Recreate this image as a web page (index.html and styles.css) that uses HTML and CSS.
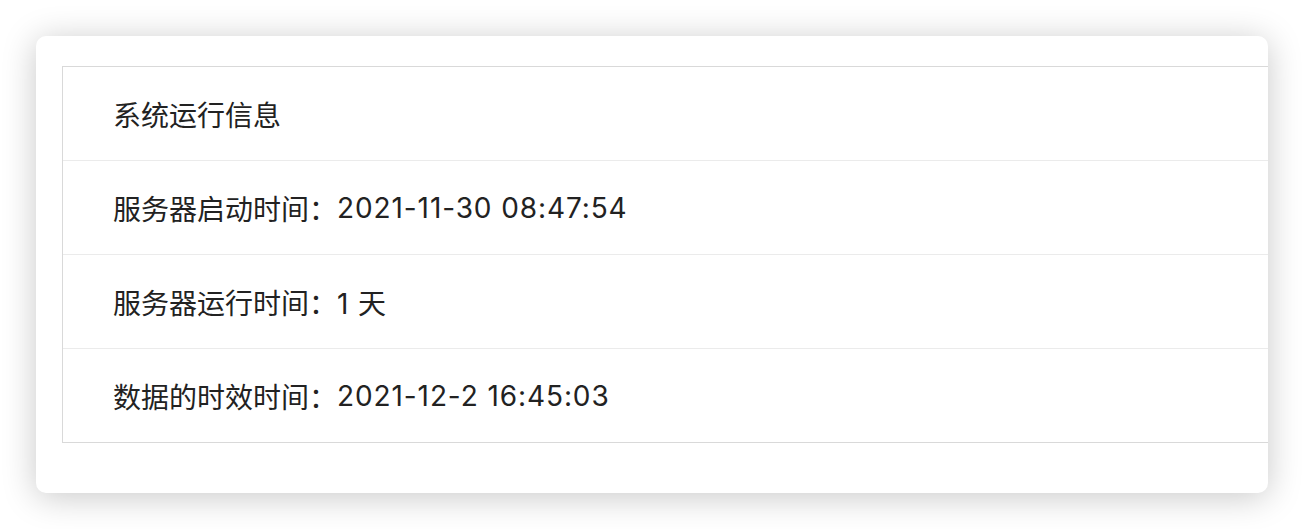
FILE: index.html
```html
<!DOCTYPE html>
<html lang="zh-CN">
<head>
<meta charset="utf-8">
<title>系统运行信息</title>
<link rel="stylesheet" href="styles.css">
</head>
<body>
<div class="card">
  <div class="table">
    <div class="row">系统运行信息</div>
    <div class="row">服务器启动时间：<span class="val">2021-11-30 08:47:54</span></div>
    <div class="row">服务器运行时间：<span class="val">1 天</span></div>
    <div class="row">数据的时效时间：<span class="val">2021-12-2 16:45:03</span></div>
  </div>
</div>
</body>
</html>
```

FILE: styles.css
```css
html, body {
  margin: 0;
  padding: 0;
  background: #ffffff;
}

body {
  padding: 36px;
  font-family: Inter, "Noto Sans CJK SC", sans-serif;
}

.card {
  width: 1232px;
  height: 457px;
  box-sizing: border-box;
  background: #ffffff;
  border-radius: 10px;
  box-shadow: 0 4px 34px rgba(0, 0, 0, 0.22);
  padding: 30px 0 50px 26px;
  overflow: hidden;
}

.table {
  width: 1240px;
  border: 1px solid #d9d9d9;
  border-right: none;
}

.row {
  height: 93px;
  display: flex;
  align-items: center;
  padding-left: 50px;
  font-size: 28px;
  color: #222222;
  border-bottom: 1px solid #ebebeb;
  white-space: pre;
}

.row:last-child {
  border-bottom: none;
}

.val {
  letter-spacing: 0.9px;
}
```
